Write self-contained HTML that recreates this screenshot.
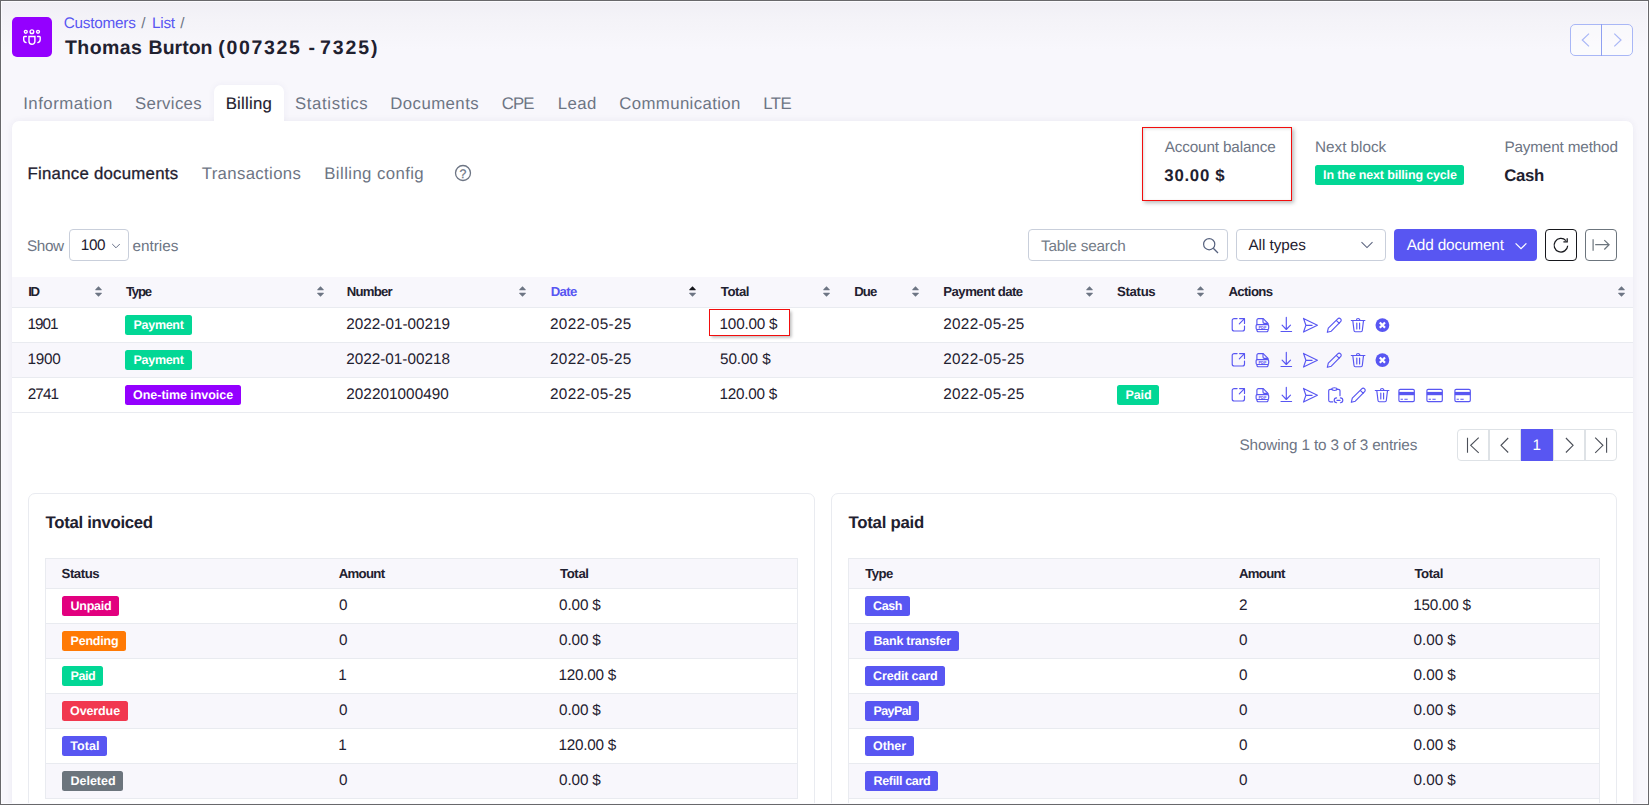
<!DOCTYPE html>
<html lang="en">
<head>
<meta charset="utf-8">
<title>Thomas Burton (007325 - 7325) - Billing - Finance documents</title>
<style>
html,body{margin:0;padding:0;}
body{width:1649px;height:805px;overflow:hidden;position:relative;font-family:"Liberation Sans",Arial,sans-serif;color:#1f2130;
background:#f8f7fc linear-gradient(180deg,#f0eff5 0,#f4f3f8 20px,#f8f7fc 50px,#f8f7fc 100%);}
.t{position:absolute;white-space:nowrap;line-height:1;text-rendering:geometricPrecision;}
svg{display:block;overflow:visible;}
#frame{position:absolute;left:0;top:0;width:1649px;height:805px;box-sizing:border-box;border:1px solid #68686b;box-shadow:inset 0 0 0 1px rgba(252,252,255,.9);pointer-events:none;z-index:50;}
</style>
</head>
<body>
<div style="position:absolute;left:12px;top:17px;width:40px;height:40px;background:#9400ff;border-radius:5px;"></div>
<svg style="position:absolute;left:21px;top:27px" width="22" height="20" viewBox="0 0 22 20" ><g fill="none" stroke="#fff" stroke-width="1.4" stroke-linecap="round">
<circle cx="10.9" cy="4.7" r="1.85"/><circle cx="4.8" cy="4.8" r="1.45"/><circle cx="17" cy="4.8" r="1.45"/>
<path d="M8 9.5h5.9v4.8a2.95 2.95 0 0 1-5.9 0z"/>
<path d="M5.3 9.5H3.5a.8.8 0 0 0-.8.8v2.2a3.2 3.2 0 0 0 2.3 3.1"/><path d="M16.6 9.5h1.8a.8.8 0 0 1 .8.8v2.2a3.2 3.2 0 0 1-2.3 3.1"/></g></svg>
<span class="t" style="left:63.71px;top:16px;font-size:15.3px;letter-spacing:-0.235px;color:#5856f2;">Customers</span>
<span class="t" style="left:141.15px;top:16px;font-size:15.3px;color:#6d7584;">/</span>
<span class="t" style="left:151.97px;top:16px;font-size:15.3px;letter-spacing:-0.226px;color:#5856f2;">List</span>
<span class="t" style="left:180.31px;top:16px;font-size:15.3px;color:#6d7584;">/</span>
<h1 style="margin:0;font:inherit">
<span class="t" style="left:65.02px;top:39px;font-size:19.5px;letter-spacing:0.408px;font-weight:700;">Thomas</span>
 
<span class="t" style="left:148.58px;top:39px;font-size:19.5px;font-weight:700;">Burton</span>
 
<span class="t" style="left:218.22px;top:39px;font-size:19.5px;letter-spacing:1.668px;font-weight:700;">(007325</span>
 
<span class="t" style="left:308.54px;top:39px;font-size:19.5px;font-weight:700;">-</span>
 
<span class="t" style="left:320.09px;top:39px;font-size:19.5px;letter-spacing:1.858px;font-weight:700;">7325)</span>
 
</h1>
<div style="position:absolute;left:1570px;top:24px;width:63px;height:32px;border:1px solid #a9b7f6;border-radius:5px;box-sizing:border-box;background:rgba(255,255,255,.45);"></div>
<div style="position:absolute;left:1601px;top:24px;width:1px;height:32px;background:#8fa0f1;"></div>
<svg style="position:absolute;left:1578px;top:32px" width="16" height="16" viewBox="0 0 16 16" ><path d="M11 1.6 4.3 8 11 14.4" fill="none" stroke="#a9b7f6" stroke-width="1.2"/></svg>
<svg style="position:absolute;left:1609px;top:32px" width="16" height="16" viewBox="0 0 16 16" ><path d="M5.3 1.6 12 8 5.3 14.4" fill="none" stroke="#a9b7f6" stroke-width="1.2"/></svg>
<div style="position:absolute;left:12px;top:121px;width:1621px;height:700px;background:#fff;border-radius:7px;box-shadow:0 0 7px rgba(60,50,120,.07);"></div>
<div style="position:absolute;left:214px;top:85px;width:70px;height:36px;background:#fff;border-radius:7px 7px 0 0;box-shadow:0 0 7px rgba(60,50,120,.055);clip-path:inset(-10px -10px 0 -10px);"></div>
<div style="position:absolute;left:214px;top:118px;width:70px;height:9px;background:#fff;"></div>
<span class="t" style="left:23.16px;top:96px;font-size:16.8px;letter-spacing:0.518px;color:#6d7584;">Information</span>
<span class="t" style="left:135.06px;top:96px;font-size:16.8px;letter-spacing:0.321px;color:#6d7584;">Services</span>
<span class="t" style="left:225.67px;top:96px;font-size:16.8px;letter-spacing:0.246px;-webkit-text-stroke:.15px;">Billing</span>
<span class="t" style="left:295.06px;top:96px;font-size:16.8px;letter-spacing:0.604px;color:#6d7584;">Statistics</span>
<span class="t" style="left:390.29px;top:96px;font-size:16.8px;letter-spacing:0.434px;color:#6d7584;">Documents</span>
<span class="t" style="left:501.68px;top:96px;font-size:16.8px;letter-spacing:-0.888px;color:#6d7584;">CPE</span>
<span class="t" style="left:557.77px;top:96px;font-size:16.8px;letter-spacing:0.425px;color:#6d7584;">Lead</span>
<span class="t" style="left:619.29px;top:96px;font-size:16.8px;letter-spacing:0.375px;color:#6d7584;">Communication</span>
<span class="t" style="left:763.26px;top:96px;font-size:16.8px;letter-spacing:-0.517px;color:#6d7584;">LTE</span>
<span class="t" style="left:27.50px;top:166px;font-size:16.8px;letter-spacing:0.259px;-webkit-text-stroke:.3px;">Finance documents</span>
<span class="t" style="left:201.66px;top:166px;font-size:16.8px;letter-spacing:0.348px;color:#6d7584;">Transactions</span>
<span class="t" style="left:324.29px;top:166px;font-size:16.8px;letter-spacing:0.399px;color:#6d7584;">Billing config</span>
<svg style="position:absolute;left:454px;top:164px" width="18" height="18" viewBox="0 0 18 18" ><circle cx="9" cy="9" r="7.5" fill="none" stroke="#6d7584" stroke-width="1.3"/></svg>
<span class="t" style="left:459.59px;top:168px;font-size:12.4px;color:#6d7584;-webkit-text-stroke:.25px;">?</span>
<div style="position:absolute;left:1142px;top:127px;width:150px;height:73.5px;border:1px solid #f20d0d;box-sizing:border-box;box-shadow:2px 2px 4px rgba(0,0,0,.27), inset 1px 1px 3px rgba(0,0,0,.14);"></div>
<span class="t" style="left:1164.74px;top:140px;font-size:15.3px;letter-spacing:-0.155px;color:#6d7584;">Account balance</span>
<span class="t" style="left:1164.34px;top:168px;font-size:16.8px;letter-spacing:0.730px;font-weight:700;">30.00 $</span>
<span class="t" style="left:1315.07px;top:140px;font-size:15.3px;letter-spacing:-0.036px;color:#6d7584;">Next block</span>
<div style="position:absolute;left:1315px;top:165px;width:149px;height:20px;background:#02d795;border-radius:2.5px;"></div>
<span class="t" style="left:1323.09px;top:169px;font-size:12.5px;letter-spacing:-0.157px;font-weight:700;color:#fff;">In the next billing cycle</span>
<span class="t" style="left:1504.38px;top:140px;font-size:15.3px;letter-spacing:-0.157px;color:#6d7584;">Payment method</span>
<span class="t" style="left:1504.33px;top:168px;font-size:16.8px;letter-spacing:-0.336px;font-weight:700;">Cash</span>
<span class="t" style="left:27.05px;top:239px;font-size:15.3px;letter-spacing:-0.410px;color:#6d7584;">Show</span>
<div style="position:absolute;left:69px;top:229px;width:60px;height:32px;border:1px solid #c9cfdb;border-radius:4px;box-sizing:border-box;background:#fff;"></div>
<span class="t" style="left:80.87px;top:238px;font-size:15.3px;letter-spacing:-0.444px;">100</span>
<svg style="position:absolute;left:111px;top:240.8px" width="10" height="10" viewBox="0 0 10 10" ><path d="M1.2 3 5 6.8 8.8 3" fill="none" stroke="#69728a" stroke-width="1"/></svg>
<span class="t" style="left:132.53px;top:239px;font-size:15.3px;letter-spacing:-0.017px;color:#6d7584;">entries</span>
<div style="position:absolute;left:1028px;top:229px;width:200px;height:32px;border:1px solid #c9cfdb;border-radius:4px;box-sizing:border-box;background:#fff;"></div>
<span class="t" style="left:1041.02px;top:239px;font-size:15.3px;letter-spacing:-0.185px;color:#747c88;">Table search</span>
<svg style="position:absolute;left:1202px;top:236.5px" width="17" height="17" viewBox="0 0 17 17" ><circle cx="7.2" cy="7.2" r="5.6" fill="none" stroke="#56617e" stroke-width="1.2"/><path d="M11.3 11.3 16 16" stroke="#56617e" stroke-width="1.3" fill="none"/></svg>
<div style="position:absolute;left:1236px;top:229px;width:150px;height:32px;border:1px solid #c9cfdb;border-radius:4px;box-sizing:border-box;background:#fff;"></div>
<span class="t" style="left:1248.46px;top:238px;font-size:15.3px;letter-spacing:-0.055px;">All types</span>
<svg style="position:absolute;left:1360.4px;top:239.4px" width="14" height="12" viewBox="0 0 14 12" ><path d="M1.5 3.1 7 8.6 12.5 3.1" fill="none" stroke="#59627d" stroke-width="1.05"/></svg>
<div style="position:absolute;left:1394px;top:229px;width:143px;height:32px;background:#5856f2;border-radius:4px;"></div>
<span class="t" style="left:1406.74px;top:238px;font-size:15.4px;letter-spacing:-0.187px;color:#fff;">Add document</span>
<svg style="position:absolute;left:1514px;top:240px" width="14" height="12" viewBox="0 0 14 12" ><path d="M1.6 3.4 7 8.6 12.4 3.4" fill="none" stroke="#fff" stroke-width="1.3"/></svg>
<div style="position:absolute;left:1545px;top:229px;width:32px;height:32px;border:1px solid #16171c;border-radius:4px;box-sizing:border-box;background:#fff;"></div>
<svg style="position:absolute;left:1552px;top:236px" width="18" height="18" viewBox="0 0 18 18" ><path d="M15.7 9.7A6.8 6.8 0 1 1 13.9 4.6" fill="none" stroke="#16171c" stroke-width="1.25"/><path d="M15.2 2.2v3.6h-3.8" fill="none" stroke="#16171c" stroke-width="1.25"/></svg>
<div style="position:absolute;left:1585px;top:229px;width:32px;height:32px;border:1px solid #6c757d;border-radius:4px;box-sizing:border-box;background:#fff;"></div>
<svg style="position:absolute;left:1592px;top:237px" width="18" height="16" viewBox="0 0 18 16" ><path d="M1.1 2.2v11.6M3.2 7.7h13.7M12.3 3.1l4.8 4.6-4.8 4.8" fill="none" stroke="#6c757d" stroke-width="1.2"/></svg>
<div style="position:absolute;left:12px;top:277px;width:1621px;height:30px;background:#f8f7fc;border-bottom:1px solid #e9ebf0;"></div>
<span class="t" style="left:28.20px;top:285px;font-size:13.2px;letter-spacing:-1.378px;font-weight:700;">ID</span>
<svg style="position:absolute;left:94.5px;top:285.9px" width="7" height="11" viewBox="0 0 7 11" ><path d="M3.5 0.2 6.7 3.6Q7 4.2 6.4 4.2H.6Q0 4.2 .3 3.6Z" fill="#6d7584"/><path d="M3.5 10.8 6.7 7.4Q7 6.8 6.4 6.8H.6Q0 6.8 .3 7.4Z" fill="#6d7584"/></svg>
<span class="t" style="left:125.99px;top:285px;font-size:13.2px;letter-spacing:-1.252px;font-weight:700;">Type</span>
<svg style="position:absolute;left:316.5px;top:285.9px" width="7" height="11" viewBox="0 0 7 11" ><path d="M3.5 0.2 6.7 3.6Q7 4.2 6.4 4.2H.6Q0 4.2 .3 3.6Z" fill="#6d7584"/><path d="M3.5 10.8 6.7 7.4Q7 6.8 6.4 6.8H.6Q0 6.8 .3 7.4Z" fill="#6d7584"/></svg>
<span class="t" style="left:346.78px;top:285px;font-size:13.2px;letter-spacing:-0.806px;font-weight:700;">Number</span>
<svg style="position:absolute;left:519.2px;top:285.9px" width="7" height="11" viewBox="0 0 7 11" ><path d="M3.5 0.2 6.7 3.6Q7 4.2 6.4 4.2H.6Q0 4.2 .3 3.6Z" fill="#6d7584"/><path d="M3.5 10.8 6.7 7.4Q7 6.8 6.4 6.8H.6Q0 6.8 .3 7.4Z" fill="#6d7584"/></svg>
<span class="t" style="left:550.74px;top:285px;font-size:13.2px;letter-spacing:-0.675px;font-weight:700;color:#5856f2;">Date</span>
<svg style="position:absolute;left:689.2px;top:285.9px" width="7" height="11" viewBox="0 0 7 11" ><path d="M3.5 0.2 6.7 3.6Q7 4.2 6.4 4.2H.6Q0 4.2 .3 3.6Z" fill="#15161c"/><path d="M3.5 10.8 6.7 7.4Q7 6.8 6.4 6.8H.6Q0 6.8 .3 7.4Z" fill="#6d7584"/></svg>
<span class="t" style="left:720.78px;top:285px;font-size:13.2px;letter-spacing:-0.456px;font-weight:700;">Total</span>
<svg style="position:absolute;left:823.0px;top:285.9px" width="7" height="11" viewBox="0 0 7 11" ><path d="M3.5 0.2 6.7 3.6Q7 4.2 6.4 4.2H.6Q0 4.2 .3 3.6Z" fill="#6d7584"/><path d="M3.5 10.8 6.7 7.4Q7 6.8 6.4 6.8H.6Q0 6.8 .3 7.4Z" fill="#6d7584"/></svg>
<span class="t" style="left:854.27px;top:285px;font-size:13.2px;letter-spacing:-0.941px;font-weight:700;">Due</span>
<svg style="position:absolute;left:912.3px;top:285.9px" width="7" height="11" viewBox="0 0 7 11" ><path d="M3.5 0.2 6.7 3.6Q7 4.2 6.4 4.2H.6Q0 4.2 .3 3.6Z" fill="#6d7584"/><path d="M3.5 10.8 6.7 7.4Q7 6.8 6.4 6.8H.6Q0 6.8 .3 7.4Z" fill="#6d7584"/></svg>
<span class="t" style="left:943.27px;top:285px;font-size:13.2px;letter-spacing:-0.530px;font-weight:700;">Payment date</span>
<svg style="position:absolute;left:1086.1px;top:285.9px" width="7" height="11" viewBox="0 0 7 11" ><path d="M3.5 0.2 6.7 3.6Q7 4.2 6.4 4.2H.6Q0 4.2 .3 3.6Z" fill="#6d7584"/><path d="M3.5 10.8 6.7 7.4Q7 6.8 6.4 6.8H.6Q0 6.8 .3 7.4Z" fill="#6d7584"/></svg>
<span class="t" style="left:1117.08px;top:285px;font-size:13.2px;letter-spacing:-0.340px;font-weight:700;">Status</span>
<svg style="position:absolute;left:1197.3px;top:285.9px" width="7" height="11" viewBox="0 0 7 11" ><path d="M3.5 0.2 6.7 3.6Q7 4.2 6.4 4.2H.6Q0 4.2 .3 3.6Z" fill="#6d7584"/><path d="M3.5 10.8 6.7 7.4Q7 6.8 6.4 6.8H.6Q0 6.8 .3 7.4Z" fill="#6d7584"/></svg>
<span class="t" style="left:1228.48px;top:285px;font-size:13.2px;letter-spacing:-0.619px;font-weight:700;">Actions</span>
<svg style="position:absolute;left:1618.3px;top:285.9px" width="7" height="11" viewBox="0 0 7 11" ><path d="M3.5 0.2 6.7 3.6Q7 4.2 6.4 4.2H.6Q0 4.2 .3 3.6Z" fill="#6d7584"/><path d="M3.5 10.8 6.7 7.4Q7 6.8 6.4 6.8H.6Q0 6.8 .3 7.4Z" fill="#6d7584"/></svg>
<div style="position:absolute;left:12px;top:308px;width:1621px;height:34px;border-bottom:1px solid #e9ebf0;"></div>
<span class="t" style="left:27.50px;top:317px;font-size:15.3px;letter-spacing:-1.025px;">1901</span>
<div style="position:absolute;left:125px;top:315px;width:67px;height:20px;background:#02d795;border-radius:2.5px;"></div>
<span class="t" style="left:133.54px;top:319px;font-size:12.5px;letter-spacing:-0.294px;font-weight:700;color:#fff;">Payment</span>
<span class="t" style="left:346.24px;top:317px;font-size:15.3px;letter-spacing:0.004px;">2022-01-00219</span>
<span class="t" style="left:549.99px;top:317px;font-size:15.3px;letter-spacing:0.335px;">2022-05-25</span>
<span class="t" style="left:719.57px;top:317px;font-size:15.3px;letter-spacing:-0.211px;">100.00 $</span>
<span class="t" style="left:943.24px;top:317px;font-size:15.3px;letter-spacing:0.303px;">2022-05-25</span>
<svg style="position:absolute;left:1230px;top:317px" width="18" height="18" viewBox="0 0 18 18" fill="none" stroke="#5856f2" stroke-width="1.15" stroke-linecap="round" stroke-linejoin="round"><path d="M7.1 1.6H4.2a2 2 0 0 0-2 2V12a2 2 0 0 0 2 2h8.3a2 2 0 0 0 2-2V9"/><path d="M9.3 6.8 14.5 1.6M9.6 1.6h4.9v4.9"/></svg>
<svg style="position:absolute;left:1254px;top:317px" width="18" height="18" viewBox="0 0 18 18" fill="none" stroke="#5856f2" stroke-width="1.15" stroke-linecap="round" stroke-linejoin="round"><path d="M2.9 7.4V3.1a1.5 1.5 0 0 1 1.5-1.5h4.8L14 6.4v1M2.9 12.6v.6a1.5 1.5 0 0 0 1.5 1.5h8.2a1.5 1.5 0 0 0 1.5-1.5v-.6"/><path d="M9 1.8V5a1.3 1.3 0 0 0 1.3 1.3h3.4"/><rect x="2.1" y="7.6" width="12.6" height="4.9" rx="1.2"/><text x="8.4" y="11.5" font-family="Liberation Sans,sans-serif" font-size="4" font-weight="700" text-anchor="middle" fill="#5856f2" stroke="none">PDF</text></svg>
<svg style="position:absolute;left:1278px;top:317px" width="18" height="18" viewBox="0 0 18 18" fill="none" stroke="#5856f2" stroke-width="1.15" stroke-linecap="round" stroke-linejoin="round"><path d="M8.3 .4v12M4.1 8.2l4.2 4.3 4.2-4.3M3 14.5h10.6"/></svg>
<svg style="position:absolute;left:1302px;top:317px" width="18" height="18" viewBox="0 0 18 18" fill="none" stroke="#5856f2" stroke-width="1.15" stroke-linecap="round" stroke-linejoin="round"><path d="M1.5 1.4 15.4 8.3 1.5 15.1 3.9 8.3zM3.9 8.3h6.2"/></svg>
<svg style="position:absolute;left:1326px;top:317px" width="18" height="18" viewBox="0 0 18 18" fill="none" stroke="#5856f2" stroke-width="1.15" stroke-linecap="round" stroke-linejoin="round"><path d="M1.3 15.3 2.3 11.2 11.7 1.8a2.05 2.05 0 0 1 2.9 2.9L5.3 14.2zM10.3 3.3l3 3"/></svg>
<svg style="position:absolute;left:1350px;top:317px" width="18" height="18" viewBox="0 0 18 18" fill="none" stroke="#5856f2" stroke-width="1.15" stroke-linecap="round" stroke-linejoin="round"><path d="M1.3 3.5h13.6M6.4 3.4a1.75 1.9 0 0 1 3.5 0M2.8 3.6 4 13.5a1.3 1.3 0 0 0 1.3 1.2H11a1.3 1.3 0 0 0 1.3-1.2L13.5 3.6M6.8 6.1v5.8M9.6 6.1v5.8"/></svg>
<svg style="position:absolute;left:1374px;top:317px" width="18" height="18" viewBox="0 0 18 18" fill="none" stroke="#5856f2" stroke-width="1.15" stroke-linecap="round" stroke-linejoin="round"><circle cx="8.4" cy="8.1" r="6.9" fill="#5856f2" stroke="none"/><path d="M5.8 5.5l5.2 5.2M11 5.5 5.8 10.7" stroke="#fff" stroke-width="2.2" stroke-linecap="butt"/></svg>
<div style="position:absolute;left:12px;top:343px;width:1621px;height:34px;background:#f8f7fc;border-bottom:1px solid #e9ebf0;"></div>
<span class="t" style="left:27.50px;top:352px;font-size:15.3px;letter-spacing:-0.265px;">1900</span>
<div style="position:absolute;left:125px;top:350px;width:67px;height:20px;background:#02d795;border-radius:2.5px;"></div>
<span class="t" style="left:133.54px;top:354px;font-size:12.5px;letter-spacing:-0.294px;font-weight:700;color:#fff;">Payment</span>
<span class="t" style="left:346.24px;top:352px;font-size:15.3px;">2022-01-00218</span>
<span class="t" style="left:549.99px;top:352px;font-size:15.3px;letter-spacing:0.335px;">2022-05-25</span>
<span class="t" style="left:719.92px;top:352px;font-size:15.3px;letter-spacing:-0.028px;">50.00 $</span>
<span class="t" style="left:943.24px;top:352px;font-size:15.3px;letter-spacing:0.303px;">2022-05-25</span>
<svg style="position:absolute;left:1230px;top:352px" width="18" height="18" viewBox="0 0 18 18" fill="none" stroke="#5856f2" stroke-width="1.15" stroke-linecap="round" stroke-linejoin="round"><path d="M7.1 1.6H4.2a2 2 0 0 0-2 2V12a2 2 0 0 0 2 2h8.3a2 2 0 0 0 2-2V9"/><path d="M9.3 6.8 14.5 1.6M9.6 1.6h4.9v4.9"/></svg>
<svg style="position:absolute;left:1254px;top:352px" width="18" height="18" viewBox="0 0 18 18" fill="none" stroke="#5856f2" stroke-width="1.15" stroke-linecap="round" stroke-linejoin="round"><path d="M2.9 7.4V3.1a1.5 1.5 0 0 1 1.5-1.5h4.8L14 6.4v1M2.9 12.6v.6a1.5 1.5 0 0 0 1.5 1.5h8.2a1.5 1.5 0 0 0 1.5-1.5v-.6"/><path d="M9 1.8V5a1.3 1.3 0 0 0 1.3 1.3h3.4"/><rect x="2.1" y="7.6" width="12.6" height="4.9" rx="1.2"/><text x="8.4" y="11.5" font-family="Liberation Sans,sans-serif" font-size="4" font-weight="700" text-anchor="middle" fill="#5856f2" stroke="none">PDF</text></svg>
<svg style="position:absolute;left:1278px;top:352px" width="18" height="18" viewBox="0 0 18 18" fill="none" stroke="#5856f2" stroke-width="1.15" stroke-linecap="round" stroke-linejoin="round"><path d="M8.3 .4v12M4.1 8.2l4.2 4.3 4.2-4.3M3 14.5h10.6"/></svg>
<svg style="position:absolute;left:1302px;top:352px" width="18" height="18" viewBox="0 0 18 18" fill="none" stroke="#5856f2" stroke-width="1.15" stroke-linecap="round" stroke-linejoin="round"><path d="M1.5 1.4 15.4 8.3 1.5 15.1 3.9 8.3zM3.9 8.3h6.2"/></svg>
<svg style="position:absolute;left:1326px;top:352px" width="18" height="18" viewBox="0 0 18 18" fill="none" stroke="#5856f2" stroke-width="1.15" stroke-linecap="round" stroke-linejoin="round"><path d="M1.3 15.3 2.3 11.2 11.7 1.8a2.05 2.05 0 0 1 2.9 2.9L5.3 14.2zM10.3 3.3l3 3"/></svg>
<svg style="position:absolute;left:1350px;top:352px" width="18" height="18" viewBox="0 0 18 18" fill="none" stroke="#5856f2" stroke-width="1.15" stroke-linecap="round" stroke-linejoin="round"><path d="M1.3 3.5h13.6M6.4 3.4a1.75 1.9 0 0 1 3.5 0M2.8 3.6 4 13.5a1.3 1.3 0 0 0 1.3 1.2H11a1.3 1.3 0 0 0 1.3-1.2L13.5 3.6M6.8 6.1v5.8M9.6 6.1v5.8"/></svg>
<svg style="position:absolute;left:1374px;top:352px" width="18" height="18" viewBox="0 0 18 18" fill="none" stroke="#5856f2" stroke-width="1.15" stroke-linecap="round" stroke-linejoin="round"><circle cx="8.4" cy="8.1" r="6.9" fill="#5856f2" stroke="none"/><path d="M5.8 5.5l5.2 5.2M11 5.5 5.8 10.7" stroke="#fff" stroke-width="2.2" stroke-linecap="butt"/></svg>
<div style="position:absolute;left:12px;top:378px;width:1621px;height:34px;border-bottom:1px solid #e9ebf0;"></div>
<span class="t" style="left:27.68px;top:387px;font-size:15.3px;letter-spacing:-0.886px;">2741</span>
<div style="position:absolute;left:125px;top:385px;width:116px;height:20px;background:#9400ff;border-radius:2.5px;"></div>
<span class="t" style="left:133.12px;top:389px;font-size:12.5px;letter-spacing:-0.050px;font-weight:700;color:#fff;">One-time invoice</span>
<span class="t" style="left:346.24px;top:387px;font-size:15.3px;letter-spacing:0.043px;">202201000490</span>
<span class="t" style="left:549.99px;top:387px;font-size:15.3px;letter-spacing:0.335px;">2022-05-25</span>
<span class="t" style="left:719.57px;top:387px;font-size:15.3px;letter-spacing:-0.276px;">120.00 $</span>
<span class="t" style="left:943.24px;top:387px;font-size:15.3px;letter-spacing:0.303px;">2022-05-25</span>
<div style="position:absolute;left:1117px;top:385px;width:42px;height:20px;background:#02d795;border-radius:2.5px;"></div>
<span class="t" style="left:1125.54px;top:389px;font-size:12.5px;letter-spacing:-0.119px;font-weight:700;color:#fff;">Paid</span>
<svg style="position:absolute;left:1230px;top:387px" width="18" height="18" viewBox="0 0 18 18" fill="none" stroke="#5856f2" stroke-width="1.15" stroke-linecap="round" stroke-linejoin="round"><path d="M7.1 1.6H4.2a2 2 0 0 0-2 2V12a2 2 0 0 0 2 2h8.3a2 2 0 0 0 2-2V9"/><path d="M9.3 6.8 14.5 1.6M9.6 1.6h4.9v4.9"/></svg>
<svg style="position:absolute;left:1254px;top:387px" width="18" height="18" viewBox="0 0 18 18" fill="none" stroke="#5856f2" stroke-width="1.15" stroke-linecap="round" stroke-linejoin="round"><path d="M2.9 7.4V3.1a1.5 1.5 0 0 1 1.5-1.5h4.8L14 6.4v1M2.9 12.6v.6a1.5 1.5 0 0 0 1.5 1.5h8.2a1.5 1.5 0 0 0 1.5-1.5v-.6"/><path d="M9 1.8V5a1.3 1.3 0 0 0 1.3 1.3h3.4"/><rect x="2.1" y="7.6" width="12.6" height="4.9" rx="1.2"/><text x="8.4" y="11.5" font-family="Liberation Sans,sans-serif" font-size="4" font-weight="700" text-anchor="middle" fill="#5856f2" stroke="none">PDF</text></svg>
<svg style="position:absolute;left:1278px;top:387px" width="18" height="18" viewBox="0 0 18 18" fill="none" stroke="#5856f2" stroke-width="1.15" stroke-linecap="round" stroke-linejoin="round"><path d="M8.3 .4v12M4.1 8.2l4.2 4.3 4.2-4.3M3 14.5h10.6"/></svg>
<svg style="position:absolute;left:1302px;top:387px" width="18" height="18" viewBox="0 0 18 18" fill="none" stroke="#5856f2" stroke-width="1.15" stroke-linecap="round" stroke-linejoin="round"><path d="M1.5 1.4 15.4 8.3 1.5 15.1 3.9 8.3zM3.9 8.3h6.2"/></svg>
<svg style="position:absolute;left:1326px;top:387px" width="18" height="18" viewBox="0 0 18 18" fill="none" stroke="#5856f2" stroke-width="1.15" stroke-linecap="round" stroke-linejoin="round"><path d="M5.8 2.3H4.2a1.5 1.5 0 0 0-1.5 1.5v9.5a1.5 1.5 0 0 0 1.5 1.5h2.6M11 2.3h1.5A1.5 1.5 0 0 1 14 3.8v4.9"/><ellipse cx="8.4" cy="2.1" rx="2.6" ry="1.35"/><path d="M10.6 10.9a2.4 2.4 0 0 0 0 4.8M14.4 10.9a2.4 2.4 0 0 1 0 4.8M10.9 13.3h3.2"/></svg>
<svg style="position:absolute;left:1350px;top:387px" width="18" height="18" viewBox="0 0 18 18" fill="none" stroke="#5856f2" stroke-width="1.15" stroke-linecap="round" stroke-linejoin="round"><path d="M1.3 15.3 2.3 11.2 11.7 1.8a2.05 2.05 0 0 1 2.9 2.9L5.3 14.2zM10.3 3.3l3 3"/></svg>
<svg style="position:absolute;left:1374px;top:387px" width="18" height="18" viewBox="0 0 18 18" fill="none" stroke="#5856f2" stroke-width="1.15" stroke-linecap="round" stroke-linejoin="round"><path d="M1.3 3.5h13.6M6.4 3.4a1.75 1.9 0 0 1 3.5 0M2.8 3.6 4 13.5a1.3 1.3 0 0 0 1.3 1.2H11a1.3 1.3 0 0 0 1.3-1.2L13.5 3.6M6.8 6.1v5.8M9.6 6.1v5.8"/></svg>
<svg style="position:absolute;left:1396.5px;top:387px" width="20" height="18" viewBox="0 0 20 18" fill="none" stroke="#5856f2" stroke-width="1.15"><rect x="1.9" y="2.3" width="15.4" height="12.3" rx="1.3"/><rect x="1.9" y="4.9" width="15.4" height="3.3" fill="#5856f2" stroke="none"/><path d="M3.6 12.3h2.3M7.4 12.3h3.3" stroke-width="1.1"/></svg>
<svg style="position:absolute;left:1424.5px;top:387px" width="20" height="18" viewBox="0 0 20 18" fill="none" stroke="#5856f2" stroke-width="1.15"><rect x="1.9" y="2.3" width="15.4" height="12.3" rx="1.3"/><rect x="1.9" y="4.9" width="15.4" height="3.3" fill="#5856f2" stroke="none"/><path d="M3.6 12.3h2.3M7.4 12.3h3.3" stroke-width="1.1"/></svg>
<svg style="position:absolute;left:1452.5px;top:387px" width="20" height="18" viewBox="0 0 20 18" fill="none" stroke="#5856f2" stroke-width="1.15"><rect x="1.9" y="2.3" width="15.4" height="12.3" rx="1.3"/><rect x="1.9" y="4.9" width="15.4" height="3.3" fill="#5856f2" stroke="none"/><path d="M3.6 12.3h2.3M7.4 12.3h3.3" stroke-width="1.1"/></svg>
<div style="position:absolute;left:709px;top:309px;width:81px;height:27px;border:1px solid #f20d0d;box-sizing:border-box;box-shadow:1.5px 1.5px 3px rgba(0,0,0,.28);"></div>
<span class="t" style="left:1239.53px;top:438px;font-size:15.3px;letter-spacing:-0.126px;color:#6d7584;">Showing 1 to 3 of 3 entries</span>
<div style="position:absolute;left:1457px;top:429px;width:160px;height:32px;border:1px solid #dee2e6;border-radius:4px;box-sizing:border-box;background:#fff;"></div>
<div style="position:absolute;left:1488px;top:429px;width:2px;height:32px;background:#dee2e6;"></div>
<div style="position:absolute;left:1520px;top:429px;width:1px;height:32px;background:#dee2e6;"></div>
<div style="position:absolute;left:1553px;top:429px;width:1px;height:32px;background:#dee2e6;"></div>
<div style="position:absolute;left:1584px;top:429px;width:2px;height:32px;background:#dee2e6;"></div>
<div style="position:absolute;left:1521px;top:429px;width:32px;height:32px;background:#5856f2;"></div>
<span class="t" style="left:1532.50px;top:438px;font-size:15.3px;color:#fff;">1</span>
<svg style="position:absolute;left:1465px;top:437px" width="16" height="17" viewBox="0 0 16 17" ><path d="M2.5 .7v15.1M13.7 .7 5.7 8.3l8 7.5" fill="none" stroke="#4b4f58" stroke-width="1.1"/></svg>
<svg style="position:absolute;left:1497px;top:437px" width="16" height="17" viewBox="0 0 16 17" ><path d="M11.2 1 4 8.3l7.2 7.2" fill="none" stroke="#4b4f58" stroke-width="1.1"/></svg>
<svg style="position:absolute;left:1561px;top:437px" width="16" height="17" viewBox="0 0 16 17" ><path d="M4.9 1l7.2 7.3-7.2 7.2" fill="none" stroke="#4b4f58" stroke-width="1.1"/></svg>
<svg style="position:absolute;left:1593px;top:437px" width="16" height="17" viewBox="0 0 16 17" ><path d="M13.6 .7v15.1M2.2 .7l7.7 7.6-7.7 7.5" fill="none" stroke="#4b4f58" stroke-width="1.1"/></svg>
<div style="position:absolute;left:28px;top:493px;width:787px;height:330px;border:1px solid #e9ebf0;border-radius:7px;box-sizing:border-box;background:#fff;"></div>
<span class="t" style="left:45.55px;top:515px;font-size:16.8px;letter-spacing:-0.308px;font-weight:700;">Total invoiced</span>
<div style="position:absolute;left:45px;top:558px;width:753.3px;height:241px;border:1px solid #e9ebf0;box-sizing:border-box;"></div>
<div style="position:absolute;left:46px;top:559px;width:751.3px;height:29px;background:#f8f7fc;border-bottom:1px solid #e9ebf0;"></div>
<span class="t" style="left:61.55px;top:567px;font-size:13.2px;letter-spacing:-0.434px;font-weight:700;">Status</span>
<span class="t" style="left:338.81px;top:567px;font-size:13.2px;letter-spacing:-0.712px;font-weight:700;">Amount</span>
<span class="t" style="left:559.99px;top:567px;font-size:13.2px;letter-spacing:-0.373px;font-weight:700;">Total</span>
<div style="position:absolute;left:46px;top:589px;width:751.3px;height:34px;border-bottom:1px solid #e9ebf0;"></div>
<div style="position:absolute;left:62px;top:596px;width:57px;height:20px;background:#e2007f;border-radius:2.5px;"></div>
<span class="t" style="left:70.53px;top:600px;font-size:12.5px;letter-spacing:-0.262px;font-weight:700;color:#fff;">Unpaid</span>
<span class="t" style="left:339.00px;top:598px;font-size:15.3px;">0</span>
<span class="t" style="left:559.12px;top:598px;font-size:15.3px;letter-spacing:-0.154px;">0.00 $</span>
<div style="position:absolute;left:46px;top:624px;width:751.3px;height:34px;background:#f8f7fc;border-bottom:1px solid #e9ebf0;"></div>
<div style="position:absolute;left:62px;top:631px;width:64px;height:20px;background:#ff7a05;border-radius:2.5px;"></div>
<span class="t" style="left:70.54px;top:635px;font-size:12.5px;letter-spacing:-0.209px;font-weight:700;color:#fff;">Pending</span>
<span class="t" style="left:339.00px;top:633px;font-size:15.3px;">0</span>
<span class="t" style="left:559.12px;top:633px;font-size:15.3px;letter-spacing:-0.154px;">0.00 $</span>
<div style="position:absolute;left:46px;top:659px;width:751.3px;height:34px;border-bottom:1px solid #e9ebf0;"></div>
<div style="position:absolute;left:62px;top:666px;width:41px;height:20px;background:#02d795;border-radius:2.5px;"></div>
<span class="t" style="left:70.54px;top:670px;font-size:12.5px;letter-spacing:-0.453px;font-weight:700;color:#fff;">Paid</span>
<span class="t" style="left:338.34px;top:668px;font-size:15.3px;">1</span>
<span class="t" style="left:558.53px;top:668px;font-size:15.3px;letter-spacing:-0.254px;">120.00 $</span>
<div style="position:absolute;left:46px;top:694px;width:751.3px;height:34px;background:#f8f7fc;border-bottom:1px solid #e9ebf0;"></div>
<div style="position:absolute;left:62px;top:701px;width:66px;height:20px;background:#f1384f;border-radius:2.5px;"></div>
<span class="t" style="left:70.12px;top:705px;font-size:12.5px;letter-spacing:-0.123px;font-weight:700;color:#fff;">Overdue</span>
<span class="t" style="left:339.00px;top:703px;font-size:15.3px;">0</span>
<span class="t" style="left:559.12px;top:703px;font-size:15.3px;letter-spacing:-0.154px;">0.00 $</span>
<div style="position:absolute;left:46px;top:729px;width:751.3px;height:34px;border-bottom:1px solid #e9ebf0;"></div>
<div style="position:absolute;left:62px;top:736px;width:45px;height:20px;background:#5856f2;border-radius:2.5px;"></div>
<span class="t" style="left:70.28px;top:740px;font-size:12.5px;letter-spacing:0.074px;font-weight:700;color:#fff;">Total</span>
<span class="t" style="left:338.34px;top:738px;font-size:15.3px;">1</span>
<span class="t" style="left:558.53px;top:738px;font-size:15.3px;letter-spacing:-0.254px;">120.00 $</span>
<div style="position:absolute;left:46px;top:764px;width:751.3px;height:34px;background:#f8f7fc;"></div>
<div style="position:absolute;left:62px;top:771px;width:61px;height:20px;background:#6c757d;border-radius:2.5px;"></div>
<span class="t" style="left:70.54px;top:775px;font-size:12.5px;letter-spacing:-0.019px;font-weight:700;color:#fff;">Deleted</span>
<span class="t" style="left:339.00px;top:773px;font-size:15.3px;">0</span>
<span class="t" style="left:559.12px;top:773px;font-size:15.3px;letter-spacing:-0.154px;">0.00 $</span>
<div style="position:absolute;left:831px;top:493px;width:786px;height:330px;border:1px solid #e9ebf0;border-radius:7px;box-sizing:border-box;background:#fff;"></div>
<span class="t" style="left:848.55px;top:515px;font-size:16.8px;letter-spacing:-0.258px;font-weight:700;">Total paid</span>
<div style="position:absolute;left:848px;top:558px;width:752px;height:260px;border:1px solid #e9ebf0;box-sizing:border-box;border-bottom:none;"></div>
<div style="position:absolute;left:849px;top:559px;width:750px;height:29px;background:#f8f7fc;border-bottom:1px solid #e9ebf0;"></div>
<span class="t" style="left:865.13px;top:567px;font-size:13.2px;letter-spacing:-0.538px;font-weight:700;">Type</span>
<span class="t" style="left:1238.89px;top:567px;font-size:13.2px;letter-spacing:-0.668px;font-weight:700;">Amount</span>
<span class="t" style="left:1414.43px;top:567px;font-size:13.2px;letter-spacing:-0.381px;font-weight:700;">Total</span>
<div style="position:absolute;left:849px;top:589px;width:750px;height:34px;border-bottom:1px solid #e9ebf0;"></div>
<div style="position:absolute;left:865px;top:596px;width:45px;height:20px;background:#5856f2;border-radius:2.5px;"></div>
<span class="t" style="left:873.12px;top:600px;font-size:12.5px;letter-spacing:-0.436px;font-weight:700;color:#fff;">Cash</span>
<span class="t" style="left:1238.98px;top:598px;font-size:15.3px;">2</span>
<span class="t" style="left:1413.15px;top:598px;font-size:15.3px;letter-spacing:-0.249px;">150.00 $</span>
<div style="position:absolute;left:849px;top:624px;width:750px;height:34px;background:#f8f7fc;border-bottom:1px solid #e9ebf0;"></div>
<div style="position:absolute;left:865px;top:631px;width:94px;height:20px;background:#5856f2;border-radius:2.5px;"></div>
<span class="t" style="left:873.54px;top:635px;font-size:12.5px;letter-spacing:-0.252px;font-weight:700;color:#fff;">Bank transfer</span>
<span class="t" style="left:1238.95px;top:633px;font-size:15.3px;">0</span>
<span class="t" style="left:1413.60px;top:633px;font-size:15.3px;letter-spacing:-0.067px;">0.00 $</span>
<div style="position:absolute;left:849px;top:659px;width:750px;height:34px;border-bottom:1px solid #e9ebf0;"></div>
<div style="position:absolute;left:865px;top:666px;width:80px;height:20px;background:#5856f2;border-radius:2.5px;"></div>
<span class="t" style="left:873.12px;top:670px;font-size:12.5px;letter-spacing:-0.154px;font-weight:700;color:#fff;">Credit card</span>
<span class="t" style="left:1238.95px;top:668px;font-size:15.3px;">0</span>
<span class="t" style="left:1413.60px;top:668px;font-size:15.3px;letter-spacing:-0.067px;">0.00 $</span>
<div style="position:absolute;left:849px;top:694px;width:750px;height:34px;background:#f8f7fc;border-bottom:1px solid #e9ebf0;"></div>
<div style="position:absolute;left:865px;top:701px;width:54px;height:20px;background:#5856f2;border-radius:2.5px;"></div>
<span class="t" style="left:873.54px;top:705px;font-size:12.5px;letter-spacing:-0.607px;font-weight:700;color:#fff;">PayPal</span>
<span class="t" style="left:1238.95px;top:703px;font-size:15.3px;">0</span>
<span class="t" style="left:1413.60px;top:703px;font-size:15.3px;letter-spacing:-0.067px;">0.00 $</span>
<div style="position:absolute;left:849px;top:729px;width:750px;height:34px;border-bottom:1px solid #e9ebf0;"></div>
<div style="position:absolute;left:865px;top:736px;width:49px;height:20px;background:#5856f2;border-radius:2.5px;"></div>
<span class="t" style="left:873.12px;top:740px;font-size:12.5px;letter-spacing:-0.092px;font-weight:700;color:#fff;">Other</span>
<span class="t" style="left:1238.95px;top:738px;font-size:15.3px;">0</span>
<span class="t" style="left:1413.60px;top:738px;font-size:15.3px;letter-spacing:-0.067px;">0.00 $</span>
<div style="position:absolute;left:849px;top:764px;width:750px;height:34px;background:#f8f7fc;border-bottom:1px solid #e9ebf0;"></div>
<div style="position:absolute;left:865px;top:771px;width:73px;height:20px;background:#5856f2;border-radius:2.5px;"></div>
<span class="t" style="left:873.54px;top:775px;font-size:12.5px;letter-spacing:-0.340px;font-weight:700;color:#fff;">Refill card</span>
<span class="t" style="left:1238.95px;top:773px;font-size:15.3px;">0</span>
<span class="t" style="left:1413.60px;top:773px;font-size:15.3px;letter-spacing:-0.067px;">0.00 $</span>
<div id="frame"></div>
</body>
</html>
